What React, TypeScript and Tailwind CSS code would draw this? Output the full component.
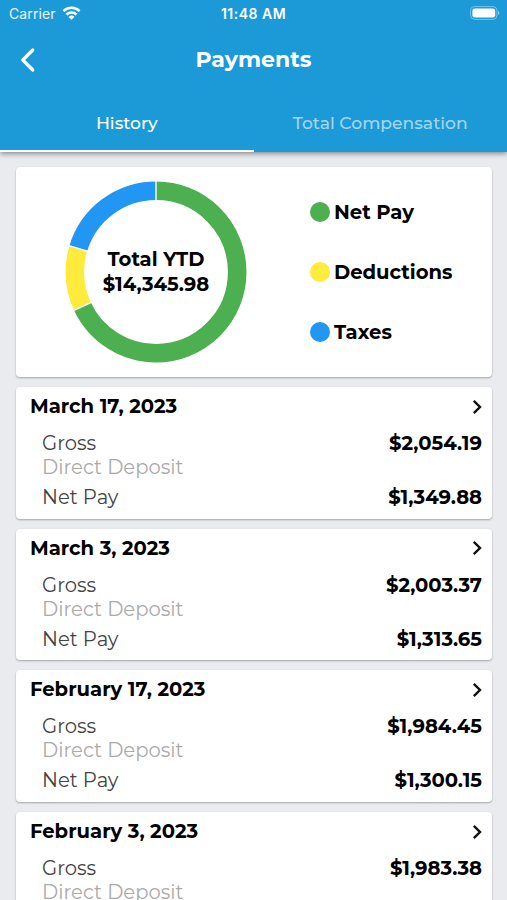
import React, { useState } from 'react';

const summary = [
  { label: 'Net Pay', percent: 68.03, stroke: 'stroke-[#4caf50]', dot: 'bg-[#4caf50]' },
  { label: 'Deductions', percent: 11.64, stroke: 'stroke-[#ffeb3b]', dot: 'bg-[#ffeb3b]' },
  { label: 'Taxes', percent: 20.33, stroke: 'stroke-[#2196f3]', dot: 'bg-[#2196f3]' }
];

const payments = [
  { id: 1, date: 'March 17, 2023', gross: '$2,054.19', net: '$1,349.88' },
  { id: 2, date: 'March 3, 2023', gross: '$2,003.37', net: '$1,313.65' },
  { id: 3, date: 'February 17, 2023', gross: '$1,984.45', net: '$1,300.15' },
  { id: 4, date: 'February 3, 2023', gross: '$1,983.38', net: '$1,299.42' }
];

const StatusBar: React.FC = () => (
  <div className="grid grid-cols-3 items-center h-7 pl-[9px] pr-[7px] font-['Inter',sans-serif] text-[14px] leading-5">
    <div className="flex items-center gap-[6px] pb-px text-white/90 tracking-[0.1px]">
      <span>Carrier</span>
      <svg className="-mt-px" width="19" height="14" viewBox="0 0 18 14" fill="none" stroke="white" strokeWidth="2.5">
        <path d="M0.9 5.1a11.6 11.6 0 0 1 16.2 0" />
        <path d="M3.9 8.5a7.4 7.4 0 0 1 10.2 0" />
        <path d="M9 13.8L6 10.9a4.3 4.3 0 0 1 6 0z" fill="white" stroke="none" />
      </svg>
    </div>
    <span className="text-center font-semibold tracking-[0.5px] pr-[2px] pb-px">11:48 AM</span>
    <svg className="-mt-0.5 justify-self-end" width="30" height="14" viewBox="0 0 30 14">
      <rect x="0.6" y="0.6" width="26.3" height="12.8" rx="4" fill="none" stroke="white" strokeOpacity="0.4" />
      <rect x="2.4" y="2.4" width="22.8" height="9.2" rx="2.4" fill="white" />
      <path d="M28 4.9c1.9.7 1.9 3.5 0 4.2z" fill="white" fillOpacity="0.5" />
    </svg>
  </div>
);

const DonutChart: React.FC = () => {
  let start = 0;
  const segments = summary.map((item) => {
    const segment = { ...item, start };
    start += item.percent;
    return segment;
  });

  return (
    <div className="grid place-items-center w-[182px] h-[182px]">
      <svg className="col-start-1 row-start-1 -rotate-90" width="182" height="182" viewBox="0 0 182 182" fill="none">
        {segments.map((item) => (
          <circle
            key={item.label}
            cx="91"
            cy="91"
            r="81.2"
            pathLength="100"
            strokeWidth="18.6"
            strokeDasharray={`${item.percent} ${100 - item.percent}`}
            strokeDashoffset={-item.start}
            className={item.stroke}
          />
        ))}
        {segments.map((item) => (
          <line
            key={item.label}
            x1="160"
            y1="91"
            x2="182"
            y2="91"
            stroke="white"
            strokeWidth="1.4"
            transform={`rotate(${item.start * 3.6} 91 91)`}
          />
        ))}
      </svg>
      <div className="col-start-1 row-start-1 text-center text-[19.6px] leading-[25px] font-bold">
        <p>Total YTD</p>
        <p>$14,345.98</p>
      </div>
    </div>
  );
};

const App: React.FC = () => {
  const [activeTab, setActiveTab] = useState<'history' | 'total'>('history');

  return (
    <div className="h-[900px] overflow-hidden flex flex-col bg-[#e9ebee] text-black font-['Montserrat','Inter',sans-serif]">
      {/* Header */}
      <header className="relative shrink-0 h-[152px] flex flex-col bg-[#1b9ad7] text-white shadow-[0_2px_5px_rgba(0,0,0,0.4)]">
        <StatusBar />
        <div className="grid grid-cols-[56px_1fr_56px] items-center h-[63px]">
          <button className="pl-[20px]" aria-label="Back">
            <svg width="16" height="26" viewBox="0 0 16 26" fill="none" stroke="white" strokeWidth="3.2">
              <path d="M12.8 3L2.8 13l10 10" strokeLinejoin="round" strokeLinecap="round" />
            </svg>
          </button>
          <h1 className="text-center text-[22px] leading-7 font-bold">Payments</h1>
        </div>
        <div className="flex flex-1 text-[17.2px] font-medium">
          <button
            onClick={() => setActiveTab('history')}
            className={`flex-1 pt-1 border-b-2 ${activeTab === 'history' ? 'border-white text-white' : 'border-transparent text-white/60'}`}
          >
            History
          </button>
          <button
            onClick={() => setActiveTab('total')}
            className={`flex-1 pt-1 border-b-2 ${activeTab === 'total' ? 'border-white text-white' : 'border-transparent text-white/60'}`}
          >
            Total Compensation
          </button>
        </div>
      </header>

      <main className="flex flex-col gap-[10px] pt-[15px] pl-4 pr-[15px]">
        {/* Year to date */}
        <section className="shrink-0 flex h-[210px] pl-[49px] pt-[14px] bg-white rounded-[4px] shadow-[0_1px_2px_rgba(0,0,0,0.3)]">
          <DonutChart />
          <ul className="ml-[63px] mt-px w-[150px]">
            {summary.map((item) => (
              <li key={item.label} className="flex items-center gap-1 h-[60px] text-[19.6px] leading-6 font-bold">
                <span className={`w-5 h-5 rounded-full ${item.dot}`} />
                <span className="pb-px">{item.label}</span>
              </li>
            ))}
          </ul>
        </section>

        {/* Payment list */}
        {payments.map((payment) => (
          <section
            key={payment.id}
            className="shrink-0 h-[131.7px] pl-[14px] pr-[10px] pt-[7px] bg-white rounded-[4px] shadow-[0_1px_2px_rgba(0,0,0,0.3)] text-[19.6px] leading-6"
          >
            <div className="flex items-center justify-between">
              <h2 className="font-bold">{payment.date}</h2>
              <svg className="mt-px" width="10" height="16" viewBox="0 0 10 16" fill="none" stroke="#111" strokeWidth="2.4">
                <path d="M1.8 1.8L8 8l-6.2 6.2" />
              </svg>
            </div>
            <div className="flex justify-between mt-[13px] pl-3">
              <span className="text-[#444]">Gross</span>
              <span className="font-bold">{payment.gross}</span>
            </div>
            <p className="pl-3 text-[#aaa]">Direct Deposit</p>
            <div className="flex justify-between mt-[6px] pl-3">
              <span className="text-[#444]">Net Pay</span>
              <span className="font-bold">{payment.net}</span>
            </div>
          </section>
        ))}
      </main>
    </div>
  );
};

export default App;
